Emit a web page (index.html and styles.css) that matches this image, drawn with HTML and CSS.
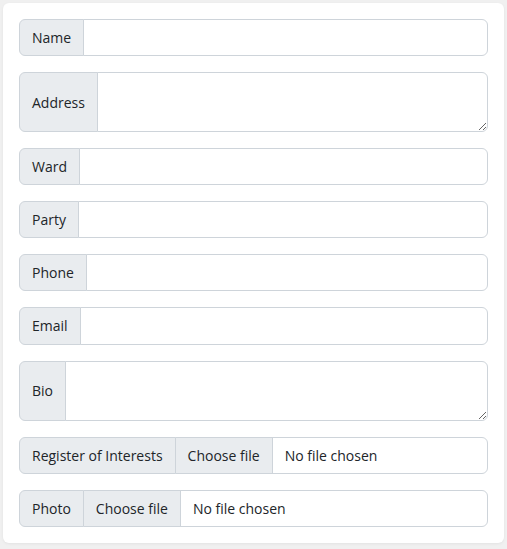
FILE: index.html
```html
<!DOCTYPE html>
<html lang="en">
<head>
<meta charset="utf-8">
<title>Councillor</title>
<link rel="stylesheet" href="styles.css">
</head>
<body>
<div class="card">
  <form class="form">
    <div class="input-group">
      <span class="input-group-text">Name</span>
      <input class="form-control" type="text">
    </div>
    <div class="input-group">
      <span class="input-group-text">Address</span>
      <textarea class="form-control" rows="2"></textarea>
    </div>
    <div class="input-group">
      <span class="input-group-text">Ward</span>
      <input class="form-control" type="text">
    </div>
    <div class="input-group">
      <span class="input-group-text">Party</span>
      <input class="form-control" type="text">
    </div>
    <div class="input-group">
      <span class="input-group-text">Phone</span>
      <input class="form-control" type="text">
    </div>
    <div class="input-group">
      <span class="input-group-text">Email</span>
      <input class="form-control" type="text">
    </div>
    <div class="input-group">
      <span class="input-group-text">Bio</span>
      <textarea class="form-control" rows="2"></textarea>
    </div>
    <div class="input-group">
      <span class="input-group-text">Register of Interests</span>
      <label class="form-control file-control">
        <input class="file-input" type="file">
        <span class="file-btn">Choose file</span>
        <span class="file-name">No file chosen</span>
      </label>
    </div>
    <div class="input-group">
      <span class="input-group-text">Photo</span>
      <label class="form-control file-control">
        <input class="file-input" type="file">
        <span class="file-btn">Choose file</span>
        <span class="file-name">No file chosen</span>
      </label>
    </div>
  </form>
</div>
</body>
</html>
```
FILE: styles.css
```css
html, body {
  margin: 0;
  padding: 0;
}
body {
  background: #f0f0f0;
  padding: 3px;
  font-family: "Open Sans", "Roboto", sans-serif;
  font-size: 14px;
  line-height: 23px;
  color: #212529;
}
.card {
  background: #fff;
  border-radius: 6px;
  box-shadow: 0 1px 3px rgba(0, 0, 0, 0.06);
  padding: 16px;
}
.form {
  display: flex;
  flex-direction: column;
  gap: 16px;
  margin: 0;
}
.input-group {
  display: flex;
  align-items: stretch;
  width: 100%;
}
.input-group-text {
  display: flex;
  align-items: center;
  padding: 6px 12px;
  font-size: 14px;
  line-height: 23px;
  color: #212529;
  background: #e9ecef;
  border: 1px solid #ced4da;
  border-radius: 6px 0 0 6px;
  white-space: nowrap;
}
.form-control {
  display: block;
  flex: 1 1 auto;
  width: 1%;
  min-width: 0;
  margin: 0 0 0 -1px;
  padding: 6px 12px;
  font-family: inherit;
  font-size: 14px;
  line-height: 23px;
  color: #212529;
  background: #fff;
  border: 1px solid #ced4da;
  border-radius: 0 6px 6px 0;
  box-sizing: border-box;
  outline: none;
}
textarea.form-control {
  height: 60.05px;
  resize: vertical;
}
input.form-control[type="text"] {
  height: 37.1px;
}
.file-control {
  display: flex;
  align-items: stretch;
  height: 37.1px;
  padding: 0;
  overflow: hidden;
  cursor: pointer;
}
.file-input {
  display: none;
}
.file-btn {
  display: flex;
  align-items: center;
  padding: 6px 12px;
  margin-right: 12px;
  background: #e9ecef;
  border-right: 1px solid #ced4da;
  white-space: nowrap;
}
.file-name {
  display: flex;
  align-items: center;
  white-space: nowrap;
}
```
